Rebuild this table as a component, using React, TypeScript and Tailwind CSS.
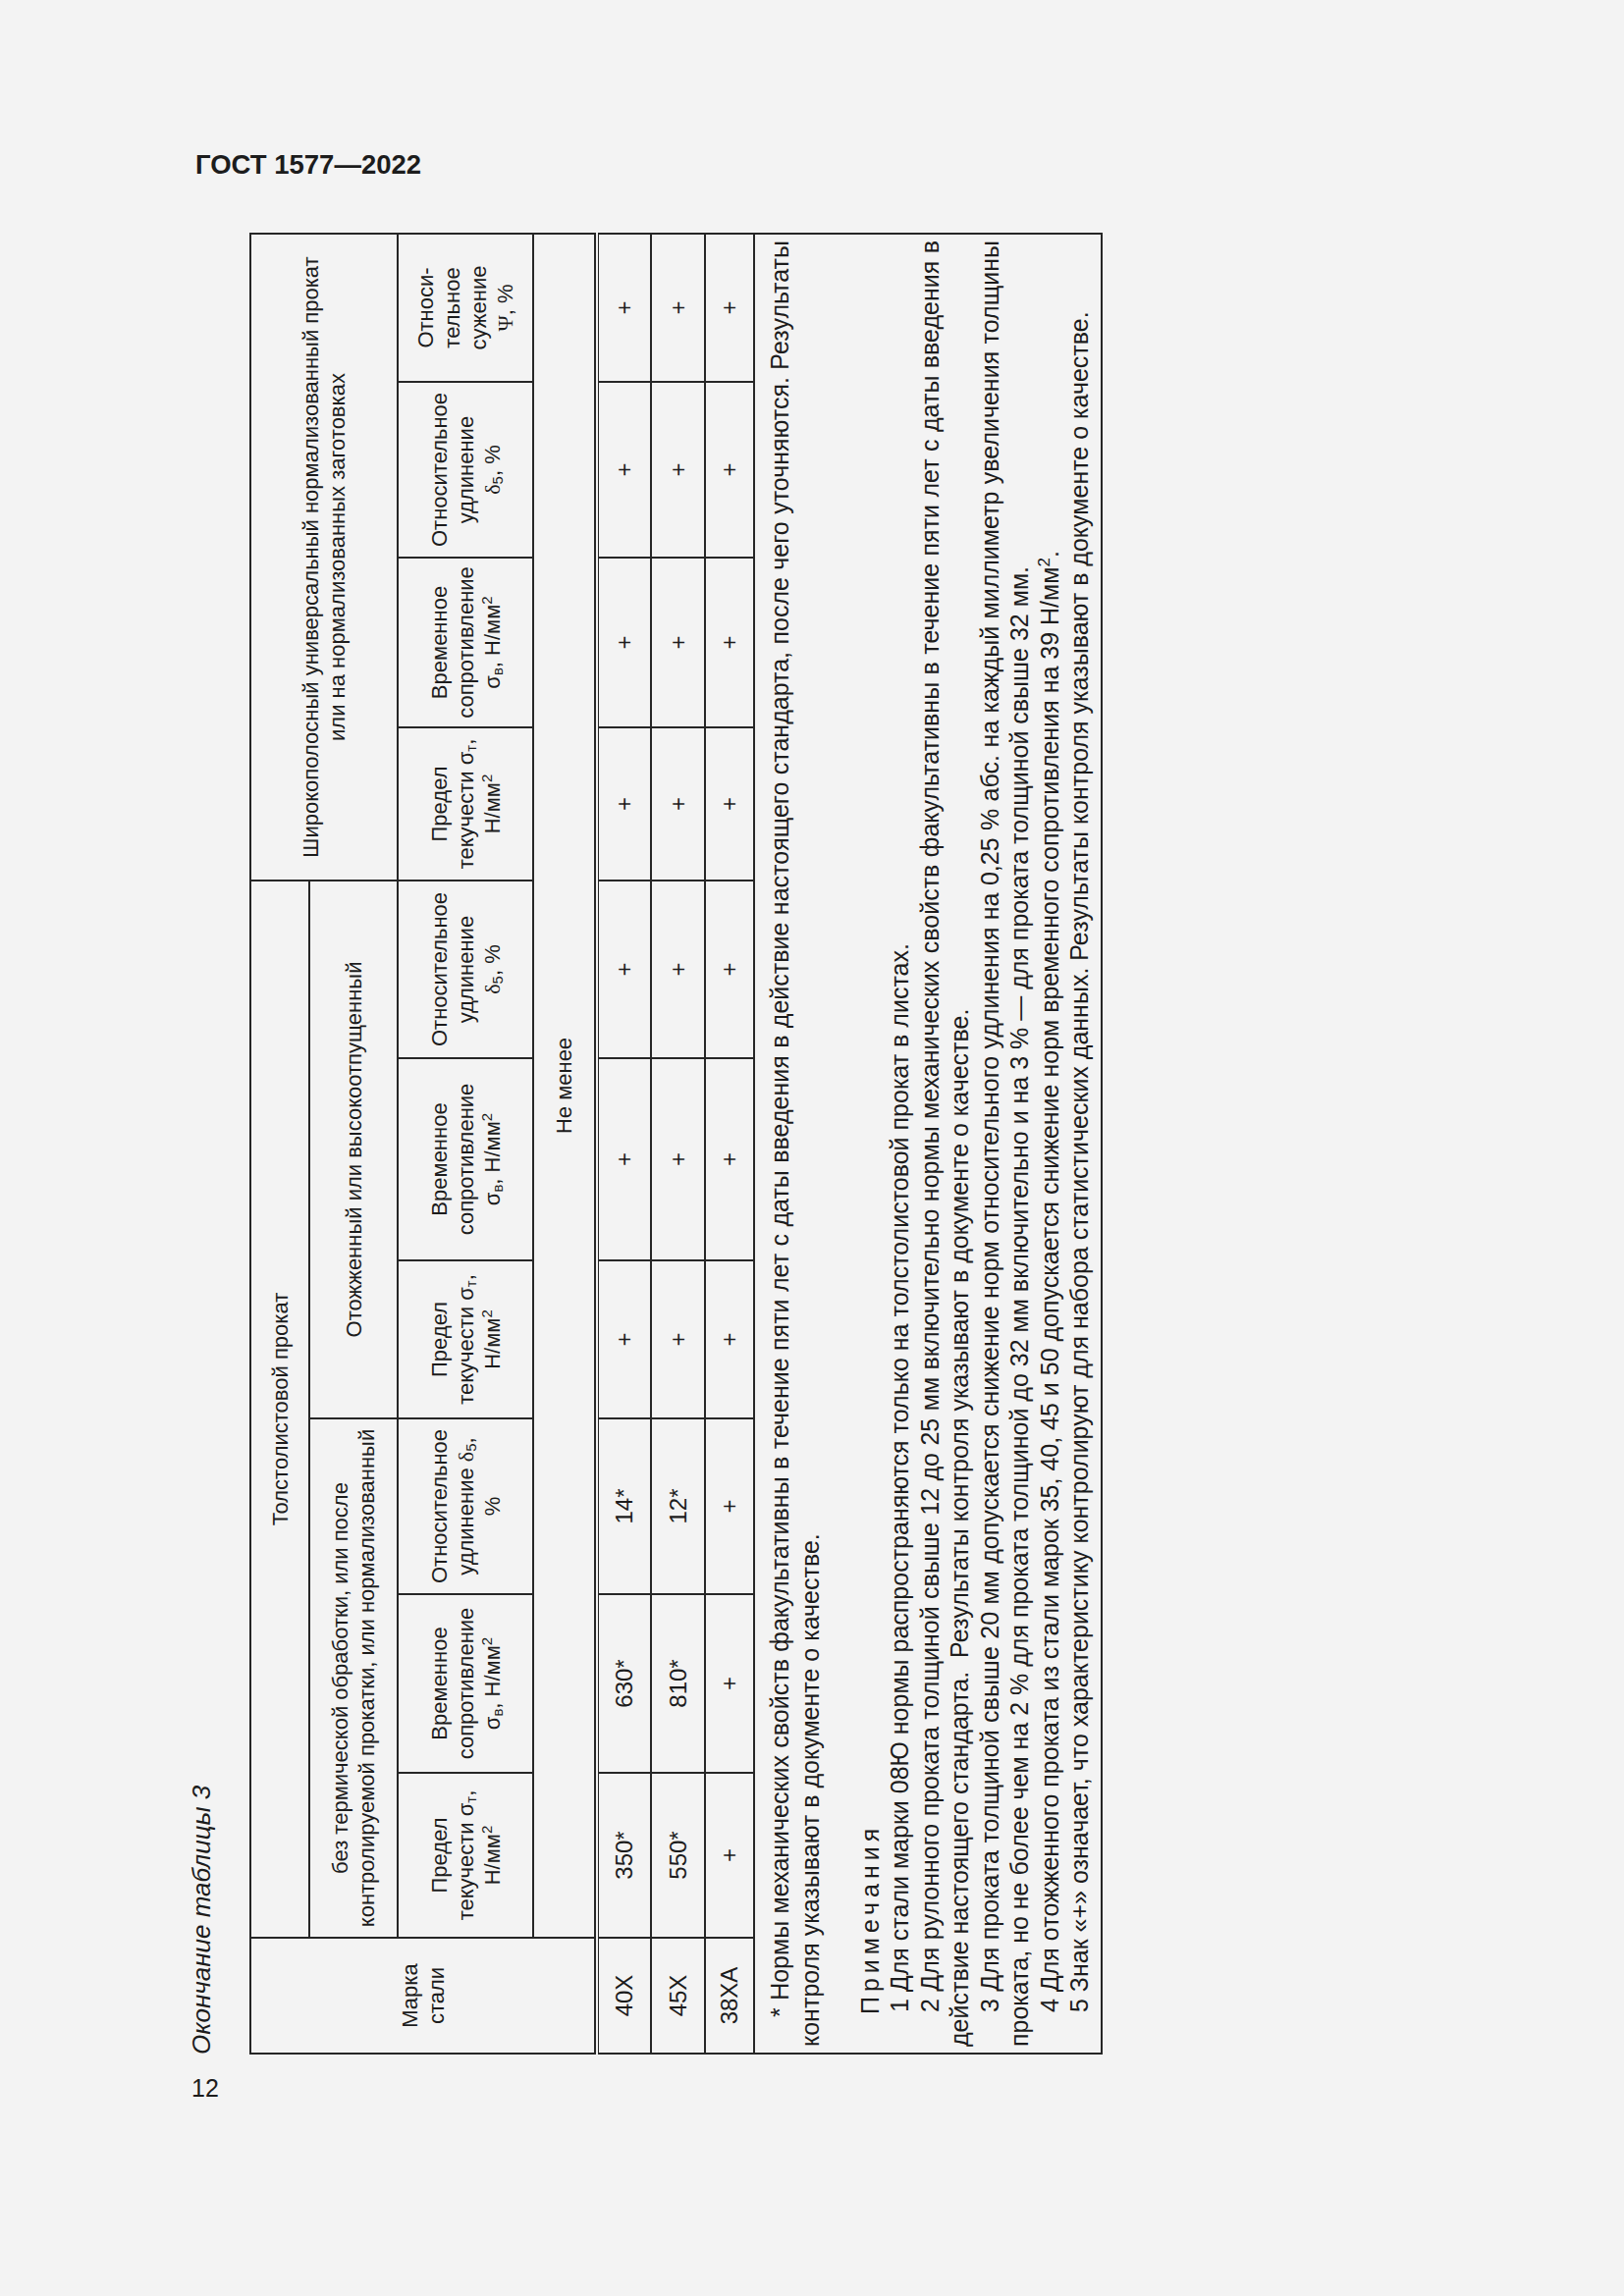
import React from "react";

const line = "border-[#262626]";

function Cell({ children, className }: { children?: React.ReactNode; className?: string }) {
  return (
    <div className={`flex items-center justify-center text-center border-r-2 border-b-2 ${line} ${className ?? ""}`}>
      {children}
    </div>
  );
}

const Sg = ({ s }: { s: string }) => (
  <>
    σ<sub className="text-[15px]">{s}</sub>
  </>
);
const Delta = () => (
  <>
    <span className="font-['Liberation_Serif',serif]">δ</span>
    <sub className="text-[15px]">5</sub>
  </>
);
const Mm2 = () => (
  <>
    Н/мм<sup className="text-[15px]">2</sup>
  </>
);

const Predel = () => (
  <Cell>
    <div>
      Предел
      <br />
      текучести <Sg s="т" />,
      <br />
      <Mm2 />
    </div>
  </Cell>
);
const Vremennoe = () => (
  <Cell>
    <div>
      Временное
      <br />
      сопротивление
      <br />
      <Sg s="в" />, <Mm2 />
    </div>
  </Cell>
);
const Udlinenie = () => (
  <Cell>
    <div>
      Относительное
      <br />
      удлинение
      <br />
      <Delta />, %
    </div>
  </Cell>
);

const rows: { mark: string; vals: string[] }[] = [
  { mark: "40Х", vals: ["350*", "630*", "14*", "+", "+", "+", "+", "+", "+", "+"] },
  { mark: "45Х", vals: ["550*", "810*", "12*", "+", "+", "+", "+", "+", "+", "+"] },
  { mark: "38ХА", vals: ["+", "+", "+", "+", "+", "+", "+", "+", "+", "+"] },
];

const cols = "grid-cols-[118px_168px_182px_179px_161px_206px_181px_156px_173px_179px_151px]";

export default function App() {
  return (
    <div className="w-[1654px] h-[2339px] overflow-hidden bg-[#f3f3f3] text-[#1c1c1c] font-['Liberation_Sans',Arial,sans-serif]">
      <div className="pl-[199px] pt-[152px] text-[27.5px] leading-[31px] font-bold">ГОСТ 1577—2022</div>

      <div className="ml-[190px] mt-[54px] w-[934px] h-[1856px]">
        <div className="w-[1856px] h-[934px] origin-top-left -rotate-90 translate-y-[1856px]">
          <div className="h-[30px] text-[26px] leading-[30px] italic">Окончание таблицы 3</div>

          <div className="mt-[34px]">
            {/* шапка */}
            <div
              className={`grid ${cols} grid-rows-[60px_90px_138px_63px] border-l-2 border-t-2 ${line} text-[22px] leading-[27px]`}
            >
              <Cell className="row-span-4 border-b">
                <div>
                  Марка
                  <br />
                  стали
                </div>
              </Cell>
              <Cell className="col-span-6">Толстолистовой прокат</Cell>
              <Cell className="col-span-4 row-span-2">
                <div className="whitespace-nowrap">
                  Широкополосный универсальный нормализованный прокат
                  <br />
                  или на нормализованных заготовках
                </div>
              </Cell>
              <Cell className="col-span-3">
                <div className="whitespace-nowrap">
                  без термической обработки, или после
                  <br />
                  контролируемой прокатки, или нормализованный
                </div>
              </Cell>
              <Cell className="col-span-3">Отожженный или высокоотпущенный</Cell>

              <Predel />
              <Vremennoe />
              <Cell>
                <div>
                  Относительное
                  <br />
                  удлинение <Delta />,
                  <br />%
                </div>
              </Cell>
              <Predel />
              <Vremennoe />
              <Udlinenie />
              <Predel />
              <Vremennoe />
              <Udlinenie />
              <Cell>
                <div>
                  Относи-
                  <br />
                  тельное
                  <br />
                  сужение
                  <br />
                  <span className="font-['Liberation_Serif',serif]">Ψ</span>, %
                </div>
              </Cell>

              <Cell className="col-span-10 border-b">Не менее</Cell>
            </div>

            {/* данные */}
            <div
              className={`mt-[2px] grid ${cols} grid-rows-[54px_55px_50px_354px] border-l-2 border-t ${line} text-[24px] leading-[28px]`}
            >
              {rows.map((r) => (
                <React.Fragment key={r.mark}>
                  <Cell>{r.mark}</Cell>
                  {r.vals.map((v, i) => (
                    <Cell key={i}>{v}</Cell>
                  ))}
                </React.Fragment>
              ))}

              <div className={`col-span-11 border-r-2 border-b-2 ${line} pl-[6px] pr-[6px] pt-[10px] text-[25px] leading-[30.5px]`}>
                <div className="pl-[30px] text-justify [text-align-last:justify]">
                  * Нормы механических свойств факультативны в течение пяти лет с даты введения в действие настоящего стандарта, после чего уточняются. Результаты
                </div>
                <div>контроля указывают в документе о качестве.</div>

                <div className="mt-[30.5px] pl-[33px] tracking-[0.2em]">Примечания</div>
                <div className="pl-[35px]">
                  1 Для стали марки 08Ю нормы распространяются только на толстолистовой прокат в листах.
                </div>
                <div className="pl-[35px] text-justify [text-align-last:justify]">
                  2 Для рулонного проката толщиной свыше 12 до 25 мм включительно нормы механических свойств факультативны в течение пяти лет с даты введения в
                </div>
                <div>действие настоящего стандарта.&nbsp; Результаты контроля указывают в документе о качестве.</div>
                <div className="pl-[35px] text-justify [text-align-last:justify]">
                  3 Для проката толщиной свыше 20 мм допускается снижение норм относительного удлинения на 0,25 % абс. на каждый миллиметр увеличения толщины
                </div>
                <div>
                  проката, но не более чем на 2 % для проката толщиной до 32 мм включительно и на 3 % — для проката толщиной свыше 32 мм.
                </div>
                <div className="pl-[35px]">
                  4 Для отожженного проката из стали марок 35, 40, 45 и 50 допускается снижение норм временного сопротивления на 39 Н/мм
                  <sup className="text-[17px]">2</sup>.
                </div>
                <div className="pl-[35px]">
                  5 Знак «+» означает, что характеристику контролируют для набора статистических данных. Результаты контроля указывают в документе о качестве.
                </div>
              </div>
            </div>
          </div>
        </div>
      </div>

      <div className="pl-[195px] mt-[20px] text-[25px] leading-[29px]">12</div>
    </div>
  );
}
